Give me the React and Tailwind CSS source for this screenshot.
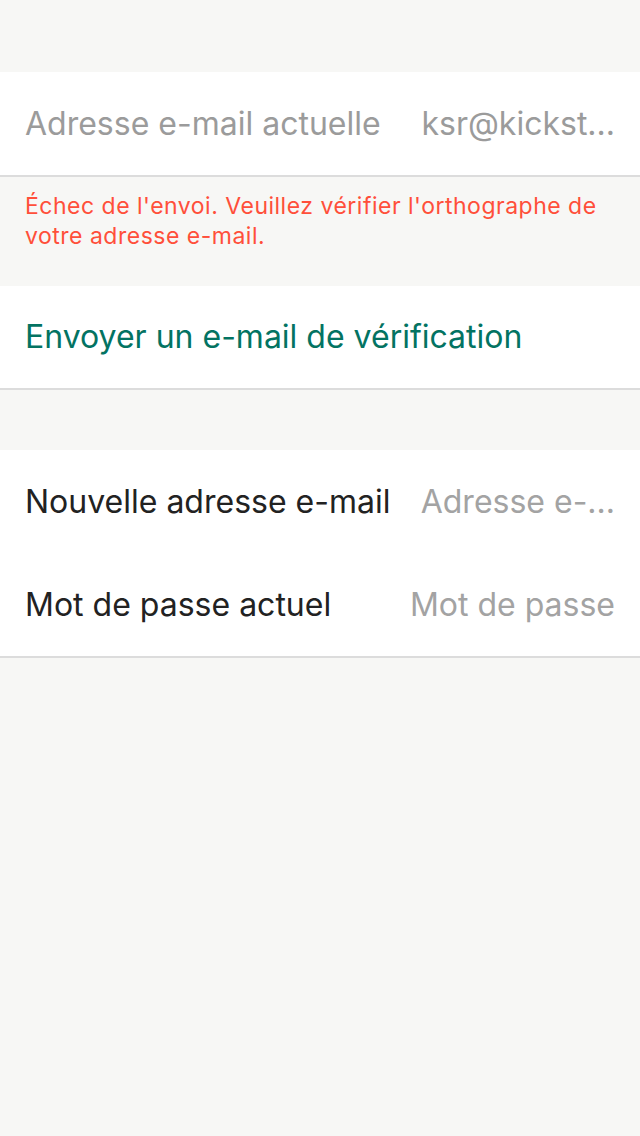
import React from "react";

const font = { fontFamily: "Inter, Roboto, 'Noto Sans', sans-serif" };

function Row({ label, value, labelClass, valueClass }) {
  return (
    <div className="flex items-center justify-between h-[103px] px-[25px] gap-6">
      <span className={`text-[32px] whitespace-nowrap min-w-0 ${labelClass}`}>{label}</span>
      <span className={`text-[32px] whitespace-nowrap shrink-0 text-right ${valueClass}`}>{value}</span>
    </div>
  );
}

export default function App() {
  return (
    <div className="min-h-[1136px] bg-[#f7f7f5] pt-[72px]" style={font}>
      {/* current email */}
      <div className="bg-white border-b-2 border-[#dcdcdc] -mb-[1px]">
        <Row
          label="Adresse e-mail actuelle"
          value="ksr@kickst..."
          labelClass="text-[#9b9b9b]"
          valueClass="text-[#9b9b9b]"
        />
      </div>
      <p className="px-[25px] pt-[15px] pb-[35px] text-[23px] tracking-[0.5px] leading-[30px] text-[#ff4f3a]">
        Échec de l'envoi. Veuillez vérifier l'orthographe de votre adresse e-mail.
      </p>

      {/* resend */}
      <div className="bg-white border-b-2 border-[#dcdcdc] h-[104px] flex items-center px-[25px]">
        <span className="text-[32px] text-[#037362]">Envoyer un e-mail de vérification</span>
      </div>

      <div className="h-[60px]" />

      {/* new email */}
      <div className="bg-white border-b-2 border-[#dcdcdc]">
        <Row
          label="Nouvelle adresse e-mail"
          value="Adresse e-..."
          labelClass="text-[#222]"
          valueClass="text-[#a3a3a3]"
        />
        <Row
          label="Mot de passe actuel"
          value="Mot de passe"
          labelClass="text-[#222]"
          valueClass="text-[#a3a3a3]"
        />
      </div>
    </div>
  );
}
